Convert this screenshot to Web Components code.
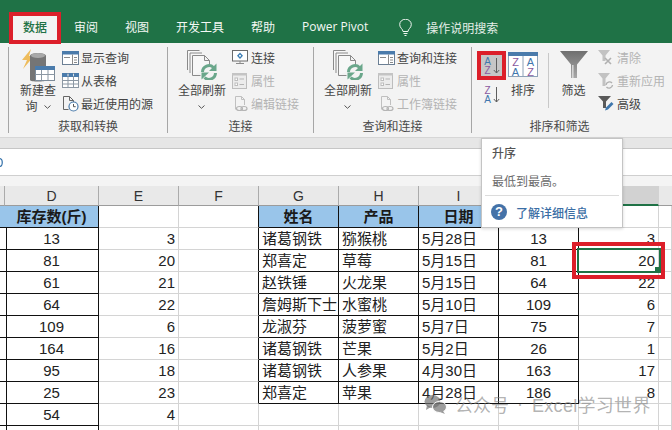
<!DOCTYPE html>
<html lang="zh">
<head>
<meta charset="utf-8">
<title>Excel 数据</title>
<style>
	html, body { margin: 0; padding: 0; }
	body {
		width: 672px;
		height: 430px;
		overflow: hidden;
		position: relative;
		display: flex;
		flex-direction: column;
		background: #fff;
		font: 12px "Noto Sans CJK SC", sans-serif;
		color: #444;
	}
</style>
</head>
<body>

<xl-tabs>
	<xl-tab active>数据</xl-tab>
	<xl-tab>审阅</xl-tab>
	<xl-tab>视图</xl-tab>
	<xl-tab>开发工具</xl-tab>
	<xl-tab>帮助</xl-tab>
	<xl-tab latin>Power Pivot</xl-tab>
	<xl-search>操作说明搜索</xl-search>
</xl-tabs>

<xl-ribbon>
	<xl-group label="获取和转换" width="159" pad="4">
		<xl-big icon="newquery" width="50" chevron>新建查<br>询</xl-big>
		<xl-list gap="-1">
			<xl-small icon="query">显示查询</xl-small>
			<xl-small icon="table">从表格</xl-small>
			<xl-small icon="recent">最近使用的源</xl-small>
		</xl-list>
	</xl-group>
	<xl-group label="连接" width="146" pad="7">
		<xl-big icon="refresh" width="54" chevron="solo">全部刷新<br></xl-big>
		<xl-list gap="3">
			<xl-small icon="conn">连接</xl-small>
			<xl-small icon="prop" disabled>属性</xl-small>
			<xl-small icon="link" disabled>编辑链接</xl-small>
		</xl-list>
	</xl-group>
	<xl-group label="查询和连接" width="158" pad="7">
		<xl-big icon="refresh" width="54" chevron="solo">全部刷新<br></xl-big>
		<xl-list gap="3">
			<xl-small icon="query">查询和连接</xl-small>
			<xl-small icon="prop" disabled>属性</xl-small>
			<xl-small icon="link" disabled>工作簿链接</xl-small>
		</xl-list>
	</xl-group>
	<xl-group label="排序和筛选" width="176" pad="5">
		<xl-sort-pair></xl-sort-pair>
		<xl-big icon="sort" width="30" style="margin-left:2px">排序</xl-big>
		<xl-sep></xl-sep>
		<xl-big icon="filter" width="49">筛选</xl-big>
		<xl-list gap="0">
			<xl-small icon="fclear" disabled>清除</xl-small>
			<xl-small icon="freapply" disabled>重新应用</xl-small>
			<xl-small icon="fadv">高级</xl-small>
		</xl-list>
	</xl-group>
</xl-ribbon>

<xl-formula></xl-formula>
<xl-sheet></xl-sheet>

<xl-tip title-text="升序" desc="最低到最高。" link="了解详细信息"></xl-tip>

<xl-mark x="9" y="12" w="52" h="32"></xl-mark>
<xl-mark x="477" y="51" w="29" h="29"></xl-mark>
<xl-mark x="572" y="242" w="93" h="37"></xl-mark>

<xl-watermark></xl-watermark>

<script>
const ICONS = {
	newquery: `<svg width="36" height="34" viewBox="0 0 36 34">
		<path d="M11 1 2 12h5L3 21 14 8H9z" fill="#eebc5c"/>
		<path d="M10 8c0-4 16-4 16 0v24c0 2-16 2-16 0z" fill="#757575"/>
		<ellipse cx="18" cy="7.5" rx="7" ry="2.6" fill="#a8a8a8"/>
		<rect x="15.5" y="18.5" width="19" height="14" fill="#fff" stroke="#7d8b99"/>
		<rect x="15" y="18" width="20" height="4" fill="#4a7bab"/>
		<path d="M15.5 26.5h19M21.5 22v10M28 22v10" stroke="#8b97a3" fill="none"/>
	</svg>`,
	query: `<svg width="17" height="14" viewBox="0 0 17 14">
		<rect x=".5" y=".5" width="16" height="13" fill="#fff" stroke="#6b7f94"/>
		<rect x="0" y="0" width="17" height="3.5" fill="#4a7bab"/>
		<path d="M10.5 3.5v10M12 6.5h3M12 9h3M12 11.5h3M2 6.5h6" stroke="#8a8a8a" fill="none"/>
	</svg>`,
	table: `<svg width="17" height="15" viewBox="0 0 17 15">
		<rect x=".5" y=".5" width="16" height="14" fill="#fff" stroke="#8b97a3"/>
		<rect x="0" y="0" width="17" height="4" fill="#4a7bab"/>
		<path d="M.5 7.5h16M.5 11h16M6 0v15M11.5 0v15" stroke="#8b97a3" fill="none"/>
		<path d="M6 1v2M11.5 1v2" stroke="#dbe6f1" fill="none"/>
	</svg>`,
	recent: `<svg width="17" height="16" viewBox="0 0 17 16">
		<path d="M1.500 .5h6l4 4v5M11.500 4.500h-4v-4M1.500 .5v13h5" fill="none" stroke="#666"/>
		<circle cx="11.500" cy="10.500" r="4.500" fill="#fff" stroke="#4a7bab" stroke-width="1.200"/>
		<path d="M11.500 8v2.700h2.200" fill="none" stroke="#555"/>
	</svg>`,
	conn: `<svg width="16" height="15" viewBox="0 0 16 15">
		<rect x=".5" y=".5" width="15" height="10.500" fill="#fff" stroke="#6b6b6b"/>
		<path d="M8 2.500 11 5.800 8 9 5 5.800z" fill="#3f7fb5"/>
		<circle cx="8" cy="5.800" r="1" fill="#fff"/>
		<path d="M8 11v2M4 13.500h8" stroke="#8a8a8a" fill="none"/>
	</svg>`,
	prop: `<svg width="16" height="16" viewBox="0 0 16 16">
		<rect x=".5" y=".5" width="14" height="15" fill="#ececec" stroke="#bdbdbd"/>
		<rect x="0" y="0" width="15" height="2.500" fill="#c4c4c4"/>
		<rect x="3" y="5" width="2.500" height="2.500" fill="#fff" stroke="#bdbdbd"/>
		<rect x="3" y="10" width="2.500" height="2.500" fill="#fff" stroke="#bdbdbd"/>
		<path d="M7.500 6h4.500M7.500 11.500h4.500" stroke="#b5b5b5" fill="none"/>
	</svg>`,
	link: `<svg width="16" height="16" viewBox="0 0 16 16">
		<path d="M3.500 13.500V.5h6l3 3v5.500M9.500.5v3h3" fill="none" stroke="#c0c0c0"/>
		<ellipse cx="7.500" cy="12.500" rx="3" ry="2" fill="#f3f3f3" stroke="#b5b5b5" stroke-width="1.200"/>
		<ellipse cx="12" cy="12.500" rx="3" ry="2" fill="none" stroke="#b5b5b5" stroke-width="1.200"/>
	</svg>`,
	refresh: `<svg width="30" height="30" viewBox="0 0 30 30">
		<path d="M.5 20V.5h12M3 23V3h12M5.500 25.500V5.500h12l5 5v6M17.500 5.500v5h5M5.500 25.500h8" fill="#f7f7f7" stroke="#8a8a8a"/>
		<path d="M15.500 22a6.500 6.500 0 0 1 11-4.500" fill="none" stroke="#6aa78b" stroke-width="3"/>
		<path d="M29.500 13.500v7.500h-7.500z" fill="#6aa78b"/>
		<path d="M28.500 23a6.500 6.500 0 0 1-11 4.500" fill="none" stroke="#6aa78b" stroke-width="3"/>
		<path d="M14.500 30v-7h7.500z" fill="#6aa78b" transform="translate(0 -.5)"/>
	</svg>`,
	sort: `<svg width="30" height="25" viewBox="0 0 30 25">
		<rect x=".5" y=".5" width="29" height="24" fill="#fff" stroke="#8ea2b8"/>
		<rect x="0" y="0" width="30" height="4" fill="#4a7bab"/>
		<path d="M15 4v21" stroke="#8ea2b8"/>
		<g font-family="Liberation Sans, sans-serif" font-size="11" text-anchor="middle">
			<text x="7.500" y="14" fill="#8a5aa0">Z</text>
			<text x="7.500" y="23.500" fill="#3f77ad">A</text>
			<text x="22.500" y="14" fill="#3f77ad">A</text>
			<text x="22.500" y="23.500" fill="#8a5aa0">Z</text>
		</g>
	</svg>`,
	filter: `<svg width="28" height="27" viewBox="0 0 28 27">
		<defs><linearGradient id="fg" x1="0" x2="0" y1="0" y2="1"><stop offset="0" stop-color="#6f6f6f"/><stop offset="1" stop-color="#a8a8a8"/></linearGradient></defs>
		<path d="M0 0h28L17 13.500V27h-6V13.500z" fill="url(#fg)"/>
		<path d="M12.800 14v13" stroke="#d8d8d8" stroke-width="1.500"/>
	</svg>`,
	fclear: `<svg width="16" height="16" viewBox="0 0 16 16">
		<path d="M0 0h12L7.500 5.500V11h-3V5.500z" fill="#c2c2c2"/>
		<path d="M7 8l6 6M13 8l-6 6" stroke="#b0b0b0" stroke-width="1.600"/>
	</svg>`,
	freapply: `<svg width="16" height="16" viewBox="0 0 16 16">
		<path d="M0 0h12L7.500 5.500V13h-3V5.500z" fill="#c2c2c2"/>
		<path d="M8 12a3.500 3.500 0 0 1 6-2M14.500 12a3.500 3.500 0 0 1-6 2" fill="none" stroke="#b0b0b0" stroke-width="1.400"/>
	</svg>`,
	fadv: `<svg width="16" height="16" viewBox="0 0 16 16">
		<path d="M0 0h13L8 5.500V12H5V5.500z" fill="#5a5a5a"/>
		<path d="M7 14.500 8 11.500 13.500 6 15.500 8 10 13.500z" fill="#3f77ad"/>
	</svg>`,
};

// colums of the sheet, x positions come from these widths
const COLS = '5px 94px repeat(7, 80px) 13px';

const SHEET = {
	left: ['13', '81', '61', '64', '109', '164', '95', '25', '54'],
	extra: ['3', '20', '21', '22', '6', '16', '18', '23', '4'],
	head: ['姓名', '产品', '日期'],
	rows: [
		['诸葛钢铁', '猕猴桃', '5月28日', '13', '3'],
		['郑喜定', '草莓', '5月15日', '81', '20'],
		['赵铁锤', '火龙果', '5月15日', '64', '22'],
		['詹姆斯下士', '水蜜桃', '5月10日', '109', '6'],
		['龙淑芬', '菠萝蜜', '5月7日', '75', '7'],
		['诸葛钢铁', '芒果', '5月2日', '26', '1'],
		['诸葛钢铁', '人参果', '4月30日', '163', '17'],
		['郑喜定', '苹果', '4月28日', '186', '8'],
	],
};

class XlTabs extends HTMLElement {
	constructor() {
		super();
		this.attachShadow({ mode: 'open' });
	}
	connectedCallback() {
		this.shadowRoot.innerHTML = `
			<style>
				:host {
					display: flex;
					align-items: flex-end;
					gap: 1px;
					height: 43px;
					flex: none;
					box-sizing: border-box;
					padding-left: 10px;
					background: #1f7246;
				}
			</style>
			<slot></slot>
		`;
	}
}

class XlTab extends HTMLElement {
	constructor() {
		super();
		this.attachShadow({ mode: 'open' });
	}
	connectedCallback() {
		this.shadowRoot.innerHTML = `
			<style>
				:host {
					display: block;
					height: 30px;
					box-sizing: border-box;
					padding: 0 13px 2px;
					line-height: 28px;
					color: #f4f8f5;
					font-size: 12px;
					white-space: nowrap;
				}
				:host([active]) { background: #f3f3f3; color: #1f7246; font-weight: 500; }
				:host([latin]) { font-family: "Open Sans", sans-serif; font-size: 12px; }
			</style>
			<slot></slot>
		`;
	}
}

class XlSearch extends HTMLElement {
	constructor() {
		super();
		this.attachShadow({ mode: 'open' });
	}
	connectedCallback() {
		this.shadowRoot.innerHTML = `
			<style>
				:host {
					display: flex;
					align-items: center;
					height: 30px;
					box-sizing: border-box;
					padding: 0 0 2px 17px;
					color: #e4eee8;
					white-space: nowrap;
				}
				svg { margin-right: 14px; }
			</style>
			<svg width="13" height="17" viewBox="0 0 13 17" fill="none" stroke="#f2f6f3">
				<path d="M4 12.500C4 10 .7 9 .7 5.500a5.800 5.300 0 0 1 11.600 0C12.300 9 9 10 9 12.500z"/>
				<path d="M4.500 14.500h4M5.500 16.500h2"/>
			</svg>
			<slot></slot>
		`;
	}
}

class XlRibbon extends HTMLElement {
	constructor() {
		super();
		this.attachShadow({ mode: 'open' });
	}
	connectedCallback() {
		this.shadowRoot.innerHTML = `
			<style>
				:host {
					display: flex;
					flex: none;
					height: 95px;
					box-sizing: border-box;
					padding: 4px 0 0 8px;
					background: #f3f3f3;
					border-bottom: 1px solid #d6d6d6;
				}
			</style>
			<slot></slot>
		`;
	}
}

class XlGroup extends HTMLElement {
	constructor() {
		super();
		this.attachShadow({ mode: 'open' });
	}
	connectedCallback() {
		this.shadowRoot.innerHTML = `
			<style>
				:host {
					display: flex;
					flex-direction: column;
					flex: none;
					height: 86px;
					box-sizing: border-box;
					width: ${this.getAttribute('width')}px;
					border-left: 1px solid #a6a6a6;
				}
				.body {
					display: flex;
					height: 70px;
					flex: none;
					padding-left: ${this.getAttribute('pad')}px;
				}
				.label {
					height: 16px;
					line-height: 16px;
					flex: none;
					margin-top: 1px;
					text-align: center;
					color: #4a4a4a;
				}
			</style>
			<div class="body"><slot></slot></div>
			<div class="label">${this.getAttribute('label')}</div>
		`;
	}
}

class XlBig extends HTMLElement {
	constructor() {
		super();
		this.attachShadow({ mode: 'open' });
	}
	connectedCallback() {
		const chevron = this.getAttribute('chevron');
		const solo = chevron === 'solo';
		this.shadowRoot.innerHTML = `
			<style>
				:host {
					display: flex;
					flex-direction: column;
					align-items: center;
					flex: none;
					width: ${this.getAttribute('width')}px;
				}
				.icon { height: 35px; display: flex; align-items: center; justify-content: center; }
				.text { line-height: 16px; text-align: center; color: #444; white-space: nowrap; }
				.chev { margin-left: ${solo ? 0 : 6}px; vertical-align: 2px; }
			</style>
			<div class="icon">${ICONS[this.getAttribute('icon')]}</div>
			<div class="text"><slot></slot>${chevron === null ? '' : `<svg class="chev" width="7" height="4" viewBox="0 0 7 4" fill="none" stroke="#555"><path d="M.5.500 3.500 3.300 6.500.5"/></svg>`}</div>
		`;
	}
}

class XlList extends HTMLElement {
	constructor() {
		super();
		this.attachShadow({ mode: 'open' });
	}
	connectedCallback() {
		this.shadowRoot.innerHTML = `
			<style>
				:host {
					display: flex;
					flex-direction: column;
					margin: -1px 0 0 ${this.getAttribute('gap')}px;
				}
			</style>
			<slot></slot>
		`;
	}
}

class XlSmall extends HTMLElement {
	constructor() {
		super();
		this.attachShadow({ mode: 'open' });
	}
	connectedCallback() {
		this.shadowRoot.innerHTML = `
			<style>
				:host {
					display: flex;
					align-items: center;
					height: 23px;
					color: #444;
					white-space: nowrap;
				}
				:host([disabled]) { color: #b4b4b4; }
				.icon { width: 19px; flex: none; display: flex; align-items: center; }
			</style>
			<div class="icon">${ICONS[this.getAttribute('icon')]}</div>
			<slot></slot>
		`;
	}
}

class XlSortPair extends HTMLElement {
	constructor() {
		super();
		this.attachShadow({ mode: 'open' });
	}
	connectedCallback() {
		const glyphs = (a, b, ca, cb) => `
			<svg width="18" height="18" viewBox="0 0 18 18">
				<g font-family="Liberation Sans, sans-serif" font-size="10" text-anchor="middle">
					<text x="4.500" y="7.500" fill="${ca}">${a}</text>
					<text x="4.500" y="16.500" fill="${cb}">${b}</text>
				</g>
				<path d="M13.500 1v15M10.800 13l2.700 3 2.700-3" fill="none" stroke="#5e5e5e"/>
			</svg>`;
		this.shadowRoot.innerHTML = `
			<style>
				:host {
					display: flex;
					flex-direction: column;
					flex: none;
					width: 29px;
					padding-top: 4px;
				}
				.btn { display: flex; align-items: center; justify-content: center; }
				.on { height: 29px; background: #c6c6c6; }
				.off { height: 18px; margin-top: 6px; }
			</style>
			<div class="btn on">${glyphs('A', 'Z', '#3f77ad', '#8a5aa0')}</div>
			<div class="btn off">${glyphs('Z', 'A', '#8a5aa0', '#3f77ad')}</div>
		`;
	}
}

class XlSep extends HTMLElement {
	constructor() {
		super();
		this.attachShadow({ mode: 'open' });
	}
	connectedCallback() {
		this.shadowRoot.innerHTML = `
			<style>
				:host {
					display: block;
					flex: none;
					width: 1px;
					height: 55px;
					margin: 6px 0 0 10px;
					background: #c8c8c8;
				}
			</style>
		`;
	}
}

class XlFormula extends HTMLElement {
	constructor() {
		super();
		this.attachShadow({ mode: 'open' });
	}
	connectedCallback() {
		this.shadowRoot.innerHTML = `
			<style>
				:host { display: block; flex: none; height: 38px; box-sizing: border-box; padding-top: 10px; background: #e6e6e6; }
				.bar {
					height: 28px;
					box-sizing: border-box;
					background: #fff;
					border-top: 1px solid #c6c6c6;
					border-bottom: 1px solid #cfcfcf;
					display: flex;
					align-items: center;
				}
			</style>
			<div class="bar">
				<svg width="3" height="9" viewBox="0 0 3 9" fill="none" stroke="#2f6ea8" stroke-width="1.200"><path d="M0 .6c3 0 3 7.800 0 7.800"/></svg>
			</div>
		`;
	}
}

class XlSheet extends HTMLElement {
	constructor() {
		super();
		this.attachShadow({ mode: 'open' });
	}
	connectedCallback() {
		const letters = ['', 'D', 'E', 'F', 'G', 'H', 'I', 'J', 'K', ''];
		const head = letters.map((l, c) => `<div class="ch${c === 8 ? ' sel' : ''}${c === 9 ? ' end' : ''}">${l}</div>`).join('');

		// 11 rows, first one holds the table headers
		let cells = '';
		for (let r = 0; r < 11; r++) {
			for (let c = 0; c < 10; c++) {
				const cls = ['c'];
				let text = '';
				const inRight = r <= 8 && c >= 4 && c <= 7;
				if (c <= 1 && r <= 10) cls.push('br');
				if (c <= 1 && r <= 9) cls.push('bb');
				if (inRight) cls.push('br', 'bb');
				if (c === 3 && r <= 8) cls.push('br');
				if (r === 0 && (c <= 1 || inRight)) cls.push('hd');
				if (c === 1) {
					if (r === 0) text = '库存数(斤)';
					else if (SHEET.left[r - 1]) text = SHEET.left[r - 1];
					cls.push('mid');
				}
				if (c === 2 && SHEET.extra[r - 1]) {
					text = SHEET.extra[r - 1];
					cls.push('end');
				}
				if (r === 0 && c >= 4 && c <= 6) text = SHEET.head[c - 4];
				if (r === 0 && c >= 4) cls.push('mid');
				if (r >= 1 && r <= 8 && c >= 4 && c <= 8) {
					text = SHEET.rows[r - 1][c - 4];
					if (c === 7) cls.push('mid');
					if (c === 8) cls.push('end');
				}
				cells += `<div class="${cls.join(' ')}">${text}</div>`;
			}
		}

		this.shadowRoot.innerHTML = `
			<style>
				:host {
					display: block;
					flex: 1;
					min-height: 0;
					overflow: hidden;
					padding-top: 10px;
					background: #f4f4f4;
					font: 15px "Liberation Sans", "Noto Sans CJK SC", sans-serif;
					color: #222;
				}
				.cols, .grid { display: grid; grid-template-columns: ${COLS}; }
				.cols { grid-auto-rows: 20px; }
				.grid { grid-auto-rows: 22px; background: #fff; }
				.ch {
					box-sizing: border-box;
					background: #e9e9e9;
					border-right: 1px solid #ababab;
					border-bottom: 1px solid #9c9c9c;
					text-align: center;
					line-height: 21px;
					font-size: 14px;
					color: #333;
				}
				.ch.sel { background: #d2d2d2; border-bottom: 2px solid #1f7246; border-right-color: #d2d2d2; }
				.ch.end { border-right: 0; }
				.c {
					box-sizing: border-box;
					border-right: 1px solid #d4d4d4;
					border-bottom: 1px solid #d4d4d4;
					padding: 0 3px;
					line-height: 21px;
					white-space: nowrap;
					overflow: hidden;
				}
				.br { border-right-color: #111; }
				.bb { border-bottom-color: #111; }
				.hd { background: #99c5ea; font-weight: 700; color: #1a1a1a; }
				.mid { text-align: center; }
				.end { text-align: right; }
			</style>
			<div class="cols">${head}</div>
			<div class="grid">${cells}</div>
		`;

		// selection box sits over the grid
		const sel = document.createElement('div');
		sel.style.cssText = 'position:absolute;left:577px;top:248px;width:84px;height:25px;box-sizing:border-box;border:2px solid #1f7246;';
		const knob = document.createElement('div');
		knob.style.cssText = 'position:absolute;right:-2px;bottom:-2px;width:6px;height:6px;background:#1f7246;';
		sel.appendChild(knob);
		this.shadowRoot.appendChild(sel);
	}
}

class XlTip extends HTMLElement {
	constructor() {
		super();
		this.attachShadow({ mode: 'open' });
	}
	connectedCallback() {
		this.shadowRoot.innerHTML = `
			<style>
				:host {
					position: absolute;
					left: 481px;
					top: 138px;
					width: 142px;
					height: 90px;
					box-sizing: border-box;
					background: #fff;
					border: 1px solid #c4c4c4;
					box-shadow: 0 1px 3px rgba(0,0,0,.16);
					display: flex;
					flex-direction: column;
				}
				.t { margin: 6px 0 0 10px; line-height: 16px; color: #555; font-weight: 500; }
				.d { margin: 12px 0 0 10px; line-height: 16px; color: #6b6b6b; }
				hr { border: 0; height: 1px; margin: 6px 3px 0; background: #dcdcdc; }
				.l { display: flex; align-items: center; gap: 9px; margin: 8px 0 0 9px; height: 16px; color: #3b6ea5; font-weight: 500; }
				.q {
					width: 16px;
					height: 16px;
					border-radius: 50%;
					background: #4472a8;
					color: #fff;
					font: 700 13px/16px "Liberation Sans", sans-serif;
					text-align: center;
				}
			</style>
			<div class="t">${this.getAttribute('title-text')}</div>
			<div class="d">${this.getAttribute('desc')}</div>
			<hr>
			<div class="l"><span class="q">?</span><span>${this.getAttribute('link')}</span></div>
		`;
	}
}

class XlMark extends HTMLElement {
	constructor() {
		super();
		this.attachShadow({ mode: 'open' });
	}
	connectedCallback() {
		const a = (n) => this.getAttribute(n);
		this.shadowRoot.innerHTML = `
			<style>
				:host {
					position: absolute;
					left: ${a('x')}px;
					top: ${a('y')}px;
					width: ${a('w')}px;
					height: ${a('h')}px;
					box-sizing: border-box;
					border: 4px solid #dc1f2a;
					pointer-events: none;
				}
			</style>
		`;
	}
}

class XlWatermark extends HTMLElement {
	constructor() {
		super();
		this.attachShadow({ mode: 'open' });
	}
	connectedCallback() {
		this.shadowRoot.innerHTML = `
			<style>
				:host {
					position: absolute;
					left: 424px;
					top: 392px;
					display: flex;
					align-items: center;
					height: 24px;
					font: 18px "Liberation Sans", "Noto Sans CJK SC", sans-serif;
					color: rgba(130,130,130,.62);
					white-space: nowrap;
					pointer-events: none;
				}
				svg { margin-right: 8px; }
				.dot { margin: 0 9px 0 8px; }
				.en { letter-spacing: .3px; }
			</style>
			<svg width="23" height="20" viewBox="0 0 23 20" fill="rgba(110,110,110,.68)">
				<ellipse cx="8.500" cy="7.500" rx="8" ry="6.500"/>
				<path d="M3 11 2 16l5-3z"/>
				<ellipse cx="15.500" cy="13" rx="7" ry="5.500" stroke="#fff" stroke-width="1"/>
				<path d="M19 17l2 3-5-2z"/>
			</svg>
			<span>公众号</span><span class="dot">·</span><span class="en">Excel学习世界</span>
		`;
	}
}

customElements.define('xl-tabs', XlTabs);
customElements.define('xl-tab', XlTab);
customElements.define('xl-search', XlSearch);
customElements.define('xl-ribbon', XlRibbon);
customElements.define('xl-group', XlGroup);
customElements.define('xl-big', XlBig);
customElements.define('xl-list', XlList);
customElements.define('xl-small', XlSmall);
customElements.define('xl-sort-pair', XlSortPair);
customElements.define('xl-sep', XlSep);
customElements.define('xl-formula', XlFormula);
customElements.define('xl-sheet', XlSheet);
customElements.define('xl-tip', XlTip);
customElements.define('xl-mark', XlMark);
customElements.define('xl-watermark', XlWatermark);
</script>
</body>
</html>
